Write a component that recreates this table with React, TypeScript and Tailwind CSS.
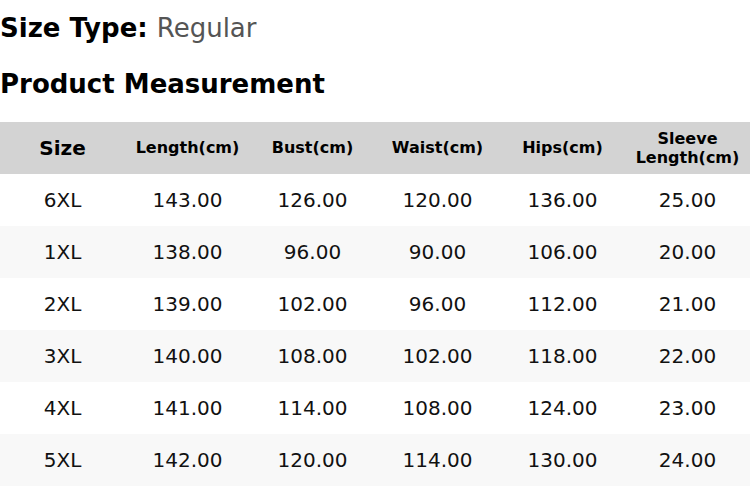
import React from "react";

const rows = [
  ["6XL", "143.00", "126.00", "120.00", "136.00", "25.00"],
  ["1XL", "138.00", "96.00", "90.00", "106.00", "20.00"],
  ["2XL", "139.00", "102.00", "96.00", "112.00", "21.00"],
  ["3XL", "140.00", "108.00", "102.00", "118.00", "22.00"],
  ["4XL", "141.00", "114.00", "108.00", "124.00", "23.00"],
  ["5XL", "142.00", "120.00", "114.00", "130.00", "24.00"],
];

const heads = ["Length(cm)", "Bust(cm)", "Waist(cm)", "Hips(cm)"];

const App = () => {
  return (
    <div className="w-[750px] bg-white text-black pt-[13px]" style={{ fontFamily: '"DejaVu Sans", sans-serif' }}>
      <h2 className="text-[26px] leading-[30px] font-bold">
        Size Type: <span className="font-normal text-[#555555]">Regular</span>
      </h2>
      <h2 className="text-[26px] leading-[30px] font-bold mt-[26px]">Product Measurement</h2>
      <table className="w-full table-fixed border-collapse mt-[23px]">
        <thead>
          <tr className="bg-[#d3d3d3] h-[52px]">
            <th className="text-[20px] font-bold">Size</th>
            {heads.map((h) => (
              <th key={h} className="text-[16px] font-bold">{h}</th>
            ))}
            <th className="text-[16px] font-bold leading-[19px]">
              Sleeve
              <br />
              Length(cm)
            </th>
          </tr>
        </thead>
        <tbody>
          {rows.map((r, i) => (
            <tr key={r[0]} className={i % 2 === 0 ? "bg-white h-[52px]" : "bg-[#f8f8f8] h-[52px]"}>
              {r.map((c, j) => (
                <td key={j} className="text-center text-[20px] text-[#111111]">{c}</td>
              ))}
            </tr>
          ))}
        </tbody>
      </table>
    </div>
  );
};

export default App;
